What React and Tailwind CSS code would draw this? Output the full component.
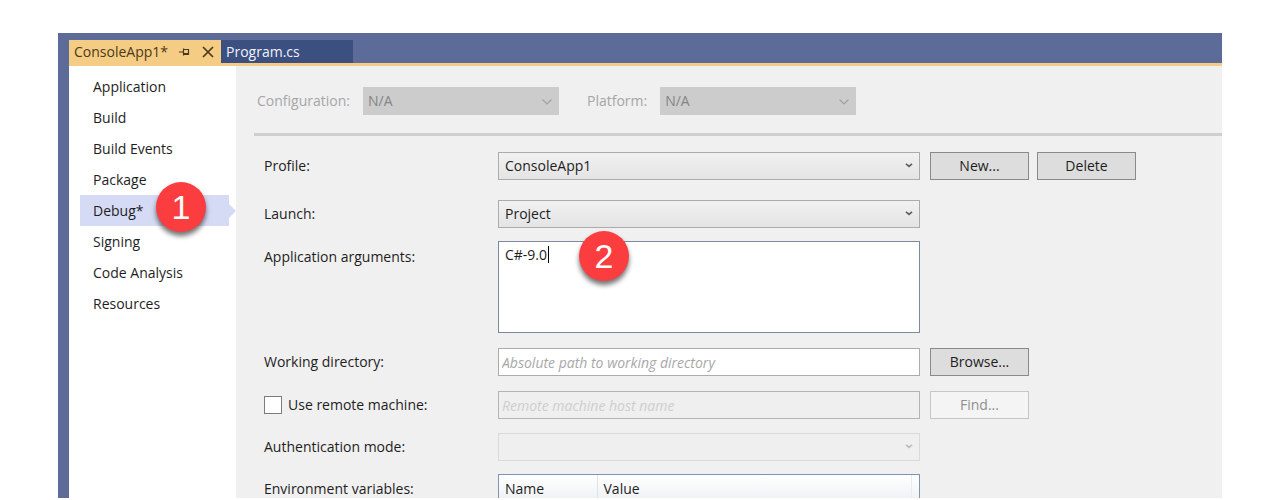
import React, { useState } from 'react';

const sections = [
  'Application',
  'Build',
  'Build Events',
  'Package',
  'Debug*',
  'Signing',
  'Code Analysis',
  'Resources',
];

const Chevron = ({ className }) => (
  <svg
    viewBox="0 0 10 6"
    fill="none"
    stroke="currentColor"
    className={`pointer-events-none absolute ${className}`}
  >
    <path d="M0.5 0.5l4.5 4.5 4.5-4.5" strokeWidth="1.1" />
  </svg>
);

const SmallChevron = ({ className }) => (
  <svg
    viewBox="0 0 8 5"
    fill="none"
    stroke="currentColor"
    className={`pointer-events-none absolute right-[7px] top-[11px] h-[5px] w-2 ${className}`}
  >
    <path d="M1 0.8l3 2.6 3-2.6" strokeWidth="1.7" />
  </svg>
);

const ToolbarSelect = ({ id, label }) => (
  <div className="flex items-center gap-[13px]">
    <label htmlFor={id} className="text-[#a6a6a6]">
      {label}
    </label>
    <div className="relative w-[196px]">
      <select
        id={id}
        disabled
        className="block h-7 w-full appearance-none bg-[#cccccc] px-[5px] text-[#858585] opacity-100"
      >
        <option>N/A</option>
      </select>
      <Chevron className="right-[7px] top-3 h-[6px] w-[10px] text-[#a0a0a0]" />
    </div>
  </div>
);

const FormSelect = ({ id, options, disabled }) => (
  <div className="relative">
    <select
      id={id}
      disabled={disabled}
      className="block h-7 w-full appearance-none border border-[#acacac] bg-linear-to-b from-[#f1f1f1] to-[#e4e4e4] px-[6px] opacity-100 disabled:border-[#dadada] disabled:bg-none disabled:bg-[#efefef]"
    >
      {options.map((option) => (
        <option key={option}>{option}</option>
      ))}
    </select>
    <SmallChevron className={disabled ? 'text-[#bdbdbd]' : 'text-[#606060]'} />
  </div>
);

const FormButton = ({ children, disabled }) => (
  <button
    type="button"
    disabled={disabled}
    className="h-7 w-[99px] border border-[#8a8a8a] bg-[#dddddd] text-center disabled:border-[#c6c6c6] disabled:bg-[#f4f4f4] disabled:text-[#8f8f8f]"
  >
    {children}
  </button>
);

const Row = ({ className, children }) => (
  <div
    className={`grid grid-cols-[234px_minmax(0,422px)_auto] justify-start ${className}`}
  >
    {children}
  </div>
);

const Badge = ({ className, children }) => (
  <span
    className={`absolute z-10 flex size-[50px] items-center justify-center rounded-full bg-[#fb3d40] font-['Liberation_Sans',sans-serif] text-[34px] leading-none text-white shadow-[0_4px_5px_rgba(0,0,0,0.55)] ${className}`}
  >
    {children}
  </span>
);

const App = () => {
  const [args, setArgs] = useState('C#-9.0');
  const [directory, setDirectory] = useState('');
  const [remote, setRemote] = useState(false);

  return (
    <div className="bg-white px-[58px] pt-[33px] font-['Open_Sans','Noto_Sans',sans-serif] text-[14px] leading-[18px] text-[#1e1e1e]">
      <div className="bg-[#5d6b99] pl-[11px] pt-[7px]">
        <div className="flex h-[23px]">
          <div className="flex w-[152px] items-center bg-[#f5cc84] pl-[5px] text-[#4b3a1a]">
            <a href="#console-app" className="w-[105px]">
              ConsoleApp1*
            </a>
            <button type="button" aria-label="Pin tab" className="w-[23px]">
              <svg
                viewBox="0 0 12 8"
                fill="none"
                stroke="currentColor"
                className="h-2 w-3"
              >
                <path d="M0 4h4M4.5 0.5v7M4.5 1.5h5v5h-5M4.5 5.5h5" strokeWidth="1.2" />
              </svg>
            </button>
            <button type="button" aria-label="Close tab">
              <svg
                viewBox="0 0 12 12"
                fill="none"
                stroke="currentColor"
                className="size-3"
              >
                <path d="M1 1l10 10M11 1L1 11" strokeWidth="1.7" />
              </svg>
            </button>
          </div>
          <a
            href="#program"
            className="flex w-[132px] items-center bg-[#3b4f81] pl-[5px] text-[#f0f2f8]"
          >
            Program.cs
          </a>
        </div>
        <div className="h-[3px] bg-[#f5cc84]" />

        <div className="flex bg-[#f0f0f0]">
          <nav className="w-[167px] shrink-0 bg-white pl-[11px] pt-[5px]">
            {sections.map((section) =>
              section === 'Debug*' ? (
                <div key={section} className="relative flex">
                  <a
                    href="#debug"
                    aria-current="page"
                    className="flex h-[31px] w-[149px] items-center bg-[#d6dbf5] pl-[13px]"
                  >
                    {section}
                  </a>
                  <svg viewBox="0 0 7 31" className="h-[31px] w-[7px]">
                    <path d="M0 9l7 7-7 7z" fill="#d6dbf5" />
                  </svg>
                  <Badge className="left-[76px] top-[-13px]">1</Badge>
                </div>
              ) : (
                <a
                  key={section}
                  href="#section"
                  className="flex h-[31px] items-center pl-[13px]"
                >
                  {section}
                </a>
              )
            )}
          </nav>

          <main className="min-w-0 flex-1 pl-[18px]">
            <div className="flex gap-7 border-b-3 border-[#cfcfcf] pb-[18px] pl-[3px] pt-[21px]">
              <ToolbarSelect id="configuration" label="Configuration:" />
              <ToolbarSelect id="platform" label="Platform:" />
            </div>

            <form className="pl-[10px] pt-4">
              <Row className="mb-5 items-center">
                <label htmlFor="profile">Profile:</label>
                <FormSelect id="profile" options={['ConsoleApp1']} />
                <div className="flex gap-2 pl-[10px]">
                  <FormButton>New...</FormButton>
                  <FormButton>Delete</FormButton>
                </div>
              </Row>
              <Row className="mb-[13px] items-center">
                <label htmlFor="launch">Launch:</label>
                <FormSelect id="launch" options={['Project', 'Executable']} />
              </Row>
              <Row className="mb-[15px]">
                <label htmlFor="arguments" className="pt-[7px]">
                  Application arguments:
                </label>
                <div className="relative">
                  <textarea
                    id="arguments"
                    value={args}
                    onChange={(e) => setArgs(e.target.value)}
                    className="block h-[92px] w-full resize-none border border-[#7d8a9c] bg-white px-[6px] py-1 outline-none"
                  />
                  <span className="absolute left-[50px] top-[5px] h-[17px] w-px bg-black" />
                  <Badge className="left-[81px] top-[-10px]">2</Badge>
                </div>
              </Row>
              <Row className="mb-[15px] items-center">
                <label htmlFor="directory">Working directory:</label>
                <input
                  id="directory"
                  type="text"
                  value={directory}
                  onChange={(e) => setDirectory(e.target.value)}
                  placeholder="Absolute path to working directory"
                  className="h-7 border border-[#acacac] bg-white px-[3px] placeholder:italic placeholder:text-[#a8a8a8]"
                />
                <div className="pl-[10px]">
                  <FormButton>Browse...</FormButton>
                </div>
              </Row>
              <Row className="mb-[14px] items-center">
                <label className="flex items-center gap-[6px]">
                  <input
                    type="checkbox"
                    checked={remote}
                    onChange={(e) => setRemote(e.target.checked)}
                    className="size-[18px] appearance-none border border-[#7c7c7c] bg-white checked:bg-[#5d6b99]"
                  />
                  Use remote machine:
                </label>
                <input
                  type="text"
                  aria-label="Remote machine host name"
                  disabled={!remote}
                  placeholder="Remote machine host name"
                  className="h-7 border border-[#b4b4b4] bg-[#efefef] px-[3px] placeholder:italic placeholder:text-[#cecece]"
                />
                <div className="pl-[10px]">
                  <FormButton disabled={!remote}>Find...</FormButton>
                </div>
              </Row>
              <Row className="mb-[13px] items-center">
                <label htmlFor="authentication">Authentication mode:</label>
                <FormSelect id="authentication" options={['']} disabled />
              </Row>
              <Row>
                <span id="variables" className="pt-[6px]">
                  Environment variables:
                </span>
                <div className="border-x border-t border-[#7f93b5] bg-white">
                  <table aria-labelledby="variables" className="w-full table-fixed">
                    <thead>
                      <tr className="h-[23px] bg-linear-to-b from-white to-[#f0f2f5] text-left">
                        <th className="w-[98px] border-r border-[#dfe3e8] px-[6px] pt-1 font-normal">
                          Name
                        </th>
                        <th className="px-[6px] pt-1 font-normal">Value</th>
                        <td className="w-2 border-l border-[#e8ebef]" />
                      </tr>
                    </thead>
                  </table>
                </div>
              </Row>
            </form>
          </main>
        </div>
      </div>
    </div>
  );
};

export default App;
